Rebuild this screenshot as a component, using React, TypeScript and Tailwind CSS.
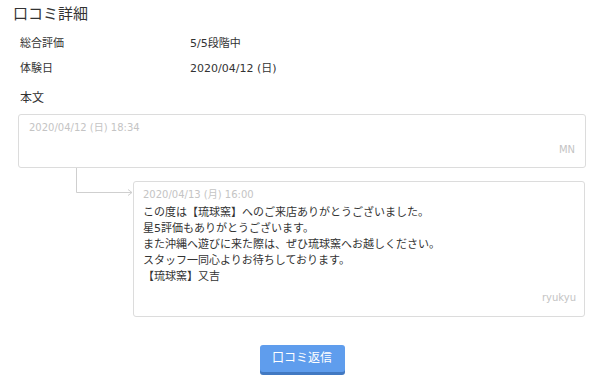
const jp = 'font-["DejaVu_Sans","Noto_Sans_CJK_JP",sans-serif]'

type Row = { label: string; value: string }

const rows: Row[] = [
  { label: '総合評価', value: '5/5段階中' },
  { label: '体験日', value: '2020/04/12 (日)' },
]

const reply = [
  'この度は【琉球窯】へのご来店ありがとうございました。',
  '星5評価もありがとうございます。',
  'また沖縄へ遊びに来た際は、ぜひ琉球窯へお越しください。',
  'スタッフ一同心よりお待ちしております。',
  '【琉球窯】又吉',
]

export default function App() {
  return (
    <div className={`w-[600px] h-[387px] bg-white text-[#333] ${jp}`}>
      <h1 className="pl-[13px] pt-[4px] text-[15px] leading-[20px] font-normal">口コミ詳細</h1>

      <dl className="mt-[7px] pl-[20px] text-[11px]">
        {rows.map((r) => (
          <div key={r.label} className="flex h-[25px] leading-[25px]">
            <dt className="w-[170px]">{r.label}</dt>
            <dd>{r.value}</dd>
          </div>
        ))}
      </dl>

      <div className="mt-[7px] pl-[20px] text-[12px] leading-[20px]">本文</div>

      {/* お客様の口コミ */}
      <div className="mt-[6px] ml-[18px] mr-[14px] rounded-[3px] border border-[#dcdcdc] pt-[6px] px-[10px] pb-[10px]">
        <div className="text-[10px] leading-[14px] text-[#c4c4c4]">2020/04/12 (日) 18:34</div>
        <div className="mt-[8px] text-right text-[10px] leading-[14px] text-[#c4c4c4]">MN</div>
      </div>

      {/* 店舗からの返信 */}
      <div className="relative mt-[13px] ml-[133px] mr-[15px]">
        <svg className="absolute left-[-58px] top-[-13px]" width="58" height="40" viewBox="0 0 58 40">
          <path d="M1.5 0 V24.5 H57" fill="none" stroke="#cfcfcf" strokeWidth="1" />
          <path d="M53 21.5 L57 24.5 L53 27.5" fill="none" stroke="#cfcfcf" strokeWidth="1" />
        </svg>
        <div className="rounded-[3px] border border-[#dcdcdc] pt-[6px] pl-[9px] pr-[8px] pb-[11px]">
          <div className="text-[10px] leading-[14px] text-[#c4c4c4]">2020/04/13 (月) 16:00</div>
          <div className="mt-[3px] text-[11px] leading-[16px] text-[#333]">
            {reply.map((line) => (
              <div key={line}>{line}</div>
            ))}
          </div>
          <div className="mt-[6px] text-right text-[10px] leading-[14px] text-[#c4c4c4]">ryukyu</div>
        </div>
      </div>

      <div className="mt-[28px] flex justify-center pl-[4px]">
        <button
          type="button"
          className="h-[27px] w-[85px] rounded-[3px] bg-[#5f9ded] text-[12px] leading-[25px] text-white shadow-[0_3px_0_#4279c2]"
        >
          口コミ返信
        </button>
      </div>
    </div>
  )
}
